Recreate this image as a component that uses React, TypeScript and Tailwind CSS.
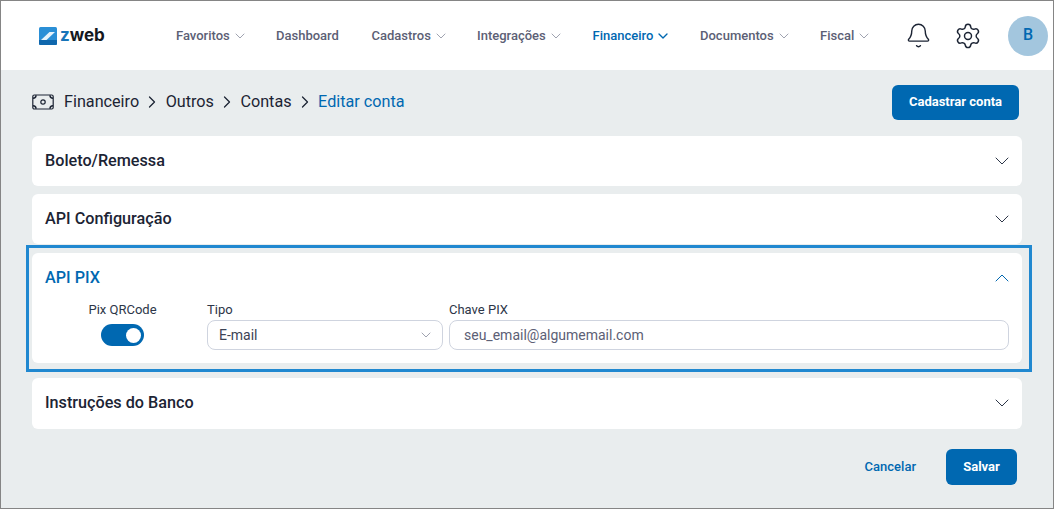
import { ChevronDown, ChevronRight, ChevronUp, Bell, Settings } from "lucide-react";

const nav = [
  { label: "Favoritos", w: "w-[100px]", chev: true },
  { label: "Dashboard", w: "w-[95.5px]", chev: false },
  { label: "Cadastros", w: "w-[105.5px]", chev: true },
  { label: "Integrações", w: "w-[115.5px]", chev: true },
  { label: "Financeiro", w: "w-[107.5px]", chev: true, active: true },
  { label: "Documentos", w: "w-[120px]", chev: true },
  { label: "Fiscal", w: "w-[70px]", chev: true },
];

function Arrow() {
  return <ChevronRight size={20} strokeWidth={1.5} className="mx-[3.25px]" />;
}

function Card({ title, h = "h-[50px]", pb = "" }: { title: string; h?: string; pb?: string }) {
  return (
    <div className={`flex items-center justify-between rounded-md bg-white pl-[13px] pr-[13px] ${h} ${pb}`}>
      <span className="text-[16.2px] font-medium text-[#1c2434]">{title}</span>
      <ChevronDown size={24} strokeWidth={1} className="mr-[-4.5px] text-[#2d3648]" />
    </div>
  );
}

export default function App() {
  return (
    <div className="h-[509px] w-[1054px] overflow-hidden border border-[#858585] bg-[#e9edee] font-['Roboto',sans-serif]">
      <header className="flex h-[69px] items-center bg-white pl-[38px]">
        <div className="flex w-[137px] items-center gap-[3px]">
          <svg width="18" height="18" viewBox="0 0 18 18">
            <rect width="18" height="18" rx="1.5" fill="#2a8fd6" />
            <path d="M2 13 L10.5 5 H16 L7.5 13Z" fill="#e6f3fb" />
            <path d="M0 13 H18 V16.5 Q18 18 16.5 18 H1.5 Q0 18 0 16.5Z" fill="#0f67ad" />
          </svg>
          <span className="font-['Inter',sans-serif] text-[17px] leading-none font-bold tracking-[0px] text-[#14181f]">
            <span className="text-[#1774b8]">z</span>web
          </span>
        </div>
        <nav className="flex items-center">
          {nav.map((n) => (
            <div key={n.label} className={`flex items-center gap-[2px] ${n.w}`}>
              <span className={`text-[13px] font-medium ${n.active ? "text-[#0068b1]" : "text-[#5c6075]"}`}>{n.label}</span>
              {n.chev && (
                <ChevronDown size={16} strokeWidth={n.active ? 2 : 1.25} className={n.active ? "text-[#0068b1]" : "text-[#8d90a0]"} />
              )}
            </div>
          ))}
        </nav>
        <div className="ml-[14.5px] flex items-center">
          <Bell size={27} strokeWidth={1.25} className="text-[#1c2434]" />
          <Settings size={28} strokeWidth={1.25} className="ml-[22px] text-[#1c2434]" />
          <div className="ml-[26.5px] flex h-10 w-10 items-center justify-center rounded-full bg-[#a3c6de] pb-[2px] text-[16px] font-medium text-[#0068b1]">
            B
          </div>
        </div>
      </header>

      <main className="px-[31px]">
        <div className="flex h-[66px] items-center justify-between pb-[2px] pr-[3px]">
          <div className="flex items-center text-[16.2px] text-[#1c2434]">
            <svg width="22" height="16" viewBox="0 0 22 16" fill="none" stroke="#1c2434" strokeWidth="1.2" className="mr-[10px]">
              <rect x="0.8" y="1" width="20.4" height="14" rx="1.5" />
              <circle cx="11" cy="8" r="2.2" />
              <path d="M1 4.2 A3 3 0 0 0 4 1.2 M18 1.2 A3 3 0 0 0 21 4.2 M1 11.8 A3 3 0 0 1 4 14.8 M18 14.8 A3 3 0 0 1 21 11.8" strokeWidth="1.5" />
            </svg>
            <span>Financeiro</span>
            <Arrow />
            <span>Outros</span>
            <Arrow />
            <span>Contas</span>
            <Arrow />
            <span className="text-[#0068b1]">Editar conta</span>
          </div>
          <button className="flex h-[35px] w-[127px] items-center justify-center rounded-md bg-[#0068b1] text-[13px] font-bold text-white">
            Cadastrar conta
          </button>
        </div>

        <div className="w-[990px]">
          <Card title="Boleto/Remessa" />
          <div className="mt-2">
            <Card title="API Configuração" />
          </div>
          <div className="mx-[-6px] mt-[1px] w-[1006px] border-[3px] border-[#2088d0] pb-[6px] pl-[3px] pr-[7px] pt-[5px]">
            <div className="h-[110px] rounded-md bg-white px-[13px]">
              <div className="flex h-[49px] items-center justify-between pt-[1px]">
                <span className="text-[16.2px] font-medium text-[#0068b1]">API PIX</span>
                <ChevronUp size={24} strokeWidth={1} className="mr-[-4.5px] text-[#0068b1]" />
              </div>
              <div className="flex">
                <div className="mr-[7px] flex w-[155px] flex-col items-center">
                  <span className="text-[13px] leading-[15px] text-[#2d3648]">Pix QRCode</span>
                  <div className="mt-[7px] flex h-[22px] w-[43px] items-center justify-end rounded-full bg-[#0068b1] pr-[3px]">
                    <div className="h-[15px] w-[15px] rounded-full bg-white" />
                  </div>
                </div>
                <div className="w-[236px]">
                  <div className="text-[13px] leading-[15px] text-[#2d3648]">Tipo</div>
                  <div className="mt-[3px] flex h-[30px] items-center justify-between rounded-lg border border-[#cfd4df] pl-[11px] pr-[8px] text-[14px] text-[#3c4355]">
                    <span>E-mail</span>
                    <ChevronDown size={16} strokeWidth={1.25} className="text-[#8d90a0]" />
                  </div>
                </div>
                <div className="ml-[6px] w-[560px]">
                  <div className="text-[13px] leading-[15px] text-[#2d3648]">Chave PIX</div>
                  <div className="mt-[3px] flex h-[30px] items-center rounded-lg border border-[#cfd4df] pl-[14px] text-[14px] text-[#5c6075]">
                    seu_email@algumemail.com
                  </div>
                </div>
              </div>
            </div>
          </div>
          <div className="mt-[6px]">
            <Card title="Instruções do Banco" h="h-[51px]" pb="pb-[1px]" />
          </div>
        </div>

        <div className="mt-5 flex w-[985px] items-center justify-end">
          <span className="mr-[30px] text-[13px] font-medium text-[#0068b1]">Cancelar</span>
          <button className="flex h-9 w-[71px] items-center justify-center rounded-md bg-[#0068b1] text-[13px] font-bold text-white">
            Salvar
          </button>
        </div>
      </main>
    </div>
  );
}
